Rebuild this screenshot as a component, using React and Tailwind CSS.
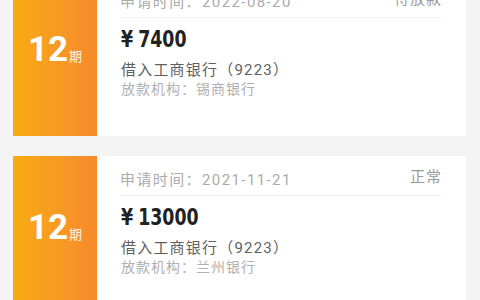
const loans = [
  { period: 12, date: "2022-08-20", status: "待放款", amount: "7400", card: "借入工商银行（9223）", lender: "锡商银行" },
  { period: 12, date: "2021-11-21", status: "正常", amount: "13000", card: "借入工商银行（9223）", lender: "兰州银行" },
];

function LoanCard({ loan }) {
  return (
    <div className="flex h-[158px] bg-white">
      {/* period strip */}
      <div className="w-[84px] shrink-0 bg-gradient-to-r from-[#f8ab0e] to-[#f68a2b] flex justify-center pt-[52px]">
        <div className="flex items-baseline h-[40px] text-white">
          <span className="text-[35px] leading-[40px] font-bold font-['Roboto',sans-serif]">{loan.period}</span>
          <span className="text-[13px] ml-[1px] text-white/90 font-['Noto_Sans_CJK_SC',sans-serif]">期</span>
        </div>
      </div>

      {/* details */}
      <div className="flex-1 pl-[23px] pr-[24px] font-['Roboto','Noto_Sans_CJK_SC',sans-serif]">
        <div className="flex justify-between items-start h-[40px] pt-[11px] border-b border-[#f3f3f3]">
          <span className="mt-[3px] text-[15px] leading-[20px] text-[#ababab] tracking-[1.4px]">申请时间：{loan.date}</span>
          <span className="text-[15px] leading-[20px] text-[#9a9a9a] tracking-[1px]">{loan.status}</span>
        </div>
        <div className="mt-[6px] h-[30px] flex items-center pl-[1px]">
          <div className="flex items-center origin-left scale-x-[0.84] text-[23px] font-bold text-[#222] font-['DejaVu_Sans',sans-serif] font-stretch-condensed">
            <span>¥</span>
            <span className="ml-[6px]">{loan.amount}</span>
          </div>
        </div>
        <div className="mt-[7px] pl-[1px] text-[15px] leading-[19px] text-[#5f5f5f] tracking-[1.2px]">{loan.card}</div>
        <div className="pl-[1px] text-[14px] leading-[19px] text-[#b0b0b0] tracking-[1px]">放款机构：{loan.lender}</div>
      </div>
    </div>
  );
}

export default function App() {
  return (
    <div className="w-[480px] h-[300px] overflow-hidden bg-[#f4f4f4]">
      <div className="-mt-[22px] px-[13px] pr-[14px] flex flex-col gap-[20px]">
        {loans.map((l, i) => (
          <LoanCard key={i} loan={l} />
        ))}
      </div>
    </div>
  );
}
